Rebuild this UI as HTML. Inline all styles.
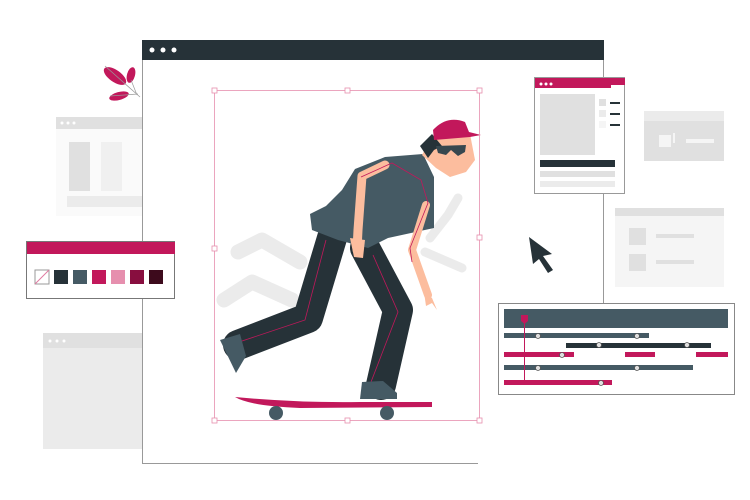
<!DOCTYPE html>
<html><head><meta charset="utf-8"><style>html,body{margin:0;padding:0;background:#fff}svg{display:block}</style></head>
<body>
<svg width="750" height="500" viewBox="0 0 750 500" xmlns="http://www.w3.org/2000/svg">
<rect x="56" y="117" width="86" height="99" fill="#fafafa"/>
<rect x="56" y="117" width="86" height="12" fill="#e0e0e0"/>
<circle cx="62" cy="123" r="1.5" fill="#fff"/><circle cx="68" cy="123" r="1.5" fill="#fff"/><circle cx="74" cy="123" r="1.5" fill="#fff"/>
<rect x="69" y="142" width="21" height="49" fill="#e0e0e0"/>
<rect x="101" y="142" width="21" height="49" fill="#f0f0f0"/>
<rect x="67" y="196" width="75" height="11" fill="#ebebeb"/>
<rect x="43" y="333" width="99" height="116" fill="#ebebeb"/>
<rect x="43" y="333" width="99" height="15" fill="#e0e0e0"/>
<circle cx="50" cy="341" r="1.5" fill="#fff"/><circle cx="57" cy="341" r="1.5" fill="#fff"/><circle cx="64" cy="341" r="1.5" fill="#fff"/>
<g fill="#c2185b">
<ellipse cx="115" cy="76" rx="13" ry="6" transform="rotate(35 115 76)"/>
<ellipse cx="131" cy="75" rx="4" ry="8" transform="rotate(15 131 75)"/>
<ellipse cx="119" cy="96" rx="10" ry="4" transform="rotate(-15 119 96)"/>
</g>
<path d="M105 66 L140 97 M131 80 L137 95 M110 96 L138 94" stroke="#999" stroke-width="0.7" fill="none"/>
<rect x="142" y="40" width="462" height="20" fill="#263238"/>
<circle cx="152" cy="50" r="2.5" fill="#fff"/><circle cx="163" cy="50" r="2.5" fill="#fff"/><circle cx="174" cy="50" r="2.5" fill="#fff"/>
<path d="M142.5 60 V463.5 H478" stroke="#999" fill="none"/>
<path d="M603.5 60 V303" stroke="#999" fill="none"/>
<rect x="26.5" y="241.5" width="148" height="57" fill="#fff" stroke="#777"/>
<rect x="27" y="242" width="148" height="12" fill="#c2185b"/>
<rect x="35" y="270" width="14" height="14" fill="#fff" stroke="#999"/>
<path d="M35 284 L49 270" stroke="#e07aa0"/>
<rect x="54" y="270" width="14" height="14" fill="#263238"/>
<rect x="73" y="270" width="14" height="14" fill="#455a64"/>
<rect x="92" y="270" width="14" height="14" fill="#c2185b"/>
<rect x="111" y="270" width="14" height="14" fill="#e68fae"/>
<rect x="130" y="270" width="14" height="14" fill="#880e3f"/>
<rect x="149" y="270" width="14" height="14" fill="#3d0a1c"/>
<rect x="534.5" y="77.5" width="90" height="116" fill="#fff" stroke="#999"/>
<rect x="535" y="78" width="90" height="7" fill="#c2185b"/>
<rect x="535" y="78" width="76" height="10" fill="#c2185b"/>
<circle cx="541" cy="84" r="1.5" fill="#fff"/><circle cx="546" cy="84" r="1.5" fill="#fff"/><circle cx="551" cy="84" r="1.5" fill="#fff"/>
<rect x="540" y="94" width="55" height="61" fill="#e0e0e0"/>
<rect x="599" y="99" width="7" height="7" fill="#e0e0e0"/><rect x="610" y="102" width="10" height="2" fill="#263238"/>
<rect x="599" y="110" width="7" height="7" fill="#ebebeb"/><rect x="610" y="113" width="10" height="2" fill="#263238"/>
<rect x="599" y="121" width="7" height="7" fill="#f5f5f5"/><rect x="610" y="124" width="10" height="2" fill="#263238"/>
<rect x="540" y="160" width="75" height="7" fill="#263238"/>
<rect x="540" y="171" width="75" height="6" fill="#e0e0e0"/>
<rect x="540" y="181" width="75" height="6" fill="#ebebeb"/>
<rect x="644" y="111" width="80" height="50" fill="#e0e0e0"/>
<rect x="644" y="111" width="80" height="10" fill="#ebebeb"/>
<rect x="659" y="135" width="12" height="12" fill="#f5f5f5"/><rect x="673" y="133" width="2" height="10" fill="#f5f5f5"/>
<rect x="686" y="139" width="28" height="4" fill="#f5f5f5"/>
<rect x="615" y="208" width="109" height="79" fill="#f5f5f5"/>
<rect x="615" y="208" width="109" height="8" fill="#e0e0e0"/>
<rect x="629" y="228" width="17" height="17" fill="#e0e0e0"/><rect x="656" y="234" width="38" height="4" fill="#e0e0e0"/>
<rect x="629" y="254" width="17" height="17" fill="#e0e0e0"/><rect x="656" y="260" width="38" height="4" fill="#e0e0e0"/>
<path d="M529 237 L552 254 L543 256 L553 270 L548 273 L539 259 L533 264 Z" fill="#263238"/>
<rect x="498.5" y="303.5" width="236" height="91" fill="#fff" stroke="#888"/>
<rect x="504" y="309" width="224" height="19" fill="#455a64"/>
<rect x="504" y="333" width="145" height="5" fill="#455a64"/>
<rect x="566" y="343" width="145" height="5" fill="#263238"/>
<rect x="504" y="352" width="70" height="5" fill="#c2185b"/>
<rect x="625" y="352" width="30" height="5" fill="#c2185b"/>
<rect x="696" y="352" width="32" height="5" fill="#c2185b"/>
<rect x="504" y="365" width="189" height="5" fill="#455a64"/>
<rect x="504" y="380" width="108" height="5" fill="#c2185b"/>
<path d="M524.5 318 V385" stroke="#c2185b"/>
<path d="M521 315 h7 v6 l-3.5 3 l-3.5 -3 z" fill="#c2185b"/>
<g fill="#e0e0e0" stroke="#555" stroke-width="0.8">
<circle cx="538" cy="336" r="2.5"/><circle cx="637" cy="336" r="2.5"/>
<circle cx="599" cy="345" r="2.5"/><circle cx="687" cy="345" r="2.5"/>
<circle cx="562" cy="355" r="2.5"/>
<circle cx="538" cy="368" r="2.5"/><circle cx="637" cy="368" r="2.5"/>
<circle cx="601" cy="383" r="2.5"/>
</g>
<!-- ghost limbs -->
<g stroke="#ebebeb" stroke-linecap="round" stroke-linejoin="round" fill="none">
<path d="M430 238 L448 215 L458 198" stroke-width="9"/>
<path d="M425 252 L462 268" stroke-width="9"/>
<path d="M300 262 L262 240 L238 252" stroke-width="15"/>
<path d="M292 300 L252 282 L224 300" stroke-width="15"/>
</g>
<!-- pants -->
<g stroke="#263238" stroke-linecap="round" stroke-linejoin="round" fill="none">
<path d="M332 238 L308 318 L238 345" stroke-width="30"/>
<path d="M365 248 L398 310 L381 385" stroke-width="30"/>
</g>
<path d="M326 240 L305 320 L236 343 M373 255 L398 312 L371 382" stroke="#c2185b" stroke-width="0.8" fill="none"/>
<path d="M220 340 L240 334 L246 356 L236 373 Z" fill="#455a64"/>
<path d="M362 382 L383 381 L397 393 L397 399 L360 399 Z" fill="#455a64"/>
<path d="M235 397 Q300 403 360 402 L432 402 L432 407 L300 408 Q250 406 235 397 Z" fill="#c2185b"/>
<circle cx="276" cy="413" r="7" fill="#455a64"/><circle cx="387" cy="413" r="7" fill="#455a64"/>
<!-- shirt -->
<path d="M385 157 L423 154 L434 177 L434 228 L388 238 L368 248 L338 240 L312 230 L310 214 L326 206 L342 190 L355 169 Z" fill="#455a64"/>
<g stroke="#fcbd9e" stroke-linecap="round" stroke-linejoin="round" fill="none">
<path d="M385 165 L362 176 L358 230 L357 250" stroke-width="9"/>
<path d="M426 205 L412 250 L428 295" stroke-width="8"/>
</g>
<path d="M424 292 L432 298 L437 310 L432 303 L426 306 Z" fill="#fcbd9e"/>
<path d="M350 238 L365 240 L363 258 L354 257 Z" fill="#fcbd9e"/>
<path d="M361 177 L392 163 L421 180 L428 203 L410 248 L412 262" stroke="#c2185b" stroke-width="0.8" fill="none"/>
<!-- head -->
<path d="M422 155 L430 140 L470 134 L475 160 L466 172 L450 177 L436 168 Z" fill="#fcbd9e"/>
<path d="M420 146 L432 134 L442 146 L434 150 L428 158 Z" fill="#263238"/>
<path d="M433 130 Q447 115 465 122 L469 132 L481 135 L470 137 L434 140 Z" fill="#c2185b"/>
<path d="M436 146 L466 145 L465 152 L458 156 L451 150 L446 155 L438 153 Z" fill="#37474f"/>
<rect x="214.5" y="90.5" width="265" height="330" fill="none" stroke="#e68fae" stroke-width="0.8"/>
<g fill="#fff" stroke="#e68fae" stroke-width="0.8">
<rect x="212" y="88" width="5" height="5"/><rect x="345" y="88" width="5" height="5"/><rect x="477" y="88" width="5" height="5"/>
<rect x="212" y="246" width="5" height="5"/><rect x="477" y="235" width="5" height="5"/>
<rect x="212" y="418" width="5" height="5"/><rect x="345" y="418" width="5" height="5"/><rect x="477" y="418" width="5" height="5"/>
</g>
</svg>
</body></html>
